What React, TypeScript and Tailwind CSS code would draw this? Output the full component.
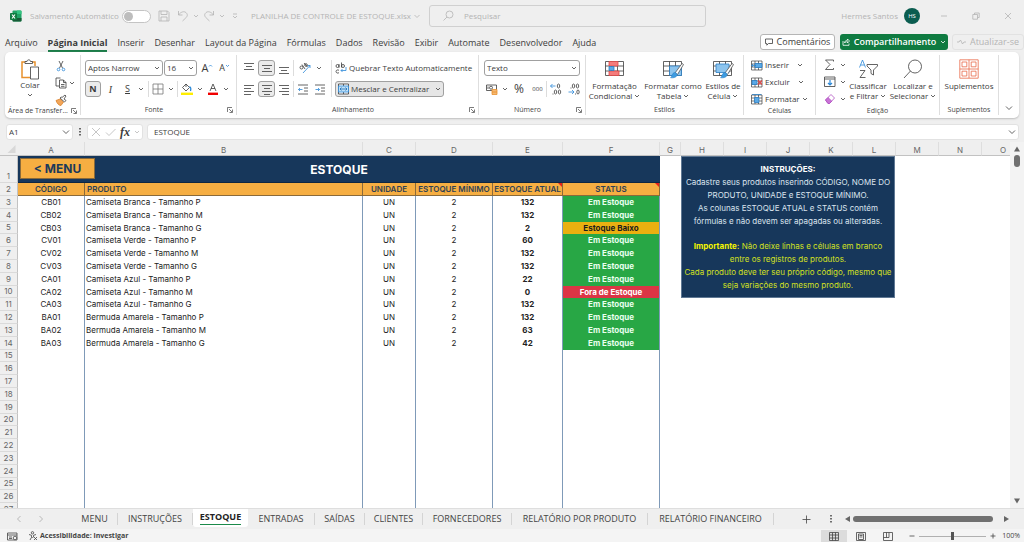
import React, { useState } from "react";
import clsx from "clsx";

const COLUMNS = [
  { letter: "A", width: "w-[67px]" },
  { letter: "B", width: "w-[278px]" },
  { letter: "C", width: "w-[53px]" },
  { letter: "D", width: "w-[77px]" },
  { letter: "E", width: "w-[70px]" },
  { letter: "F", width: "w-[97px]" },
  { letter: "G", width: "w-[21px]" },
  { letter: "H", width: "w-[43px]" },
  { letter: "I", width: "w-[43px]" },
  { letter: "J", width: "w-[43px]" },
  { letter: "K", width: "w-[43px]" },
  { letter: "L", width: "w-[43px]" },
  { letter: "M", width: "w-[43px]" },
  { letter: "N", width: "w-[43px]" },
  { letter: "O", width: "w-[43px]" },
];

const PRODUCTS = [
  { code: "CB01", name: "Camiseta Branca - Tamanho P", stock: 132 },
  { code: "CB02", name: "Camiseta Branca - Tamanho M", stock: 132 },
  { code: "CB03", name: "Camiseta Branca - Tamanho G", stock: 2 },
  { code: "CV01", name: "Camiseta Verde - Tamanho P", stock: 60 },
  { code: "CV02", name: "Camiseta Verde - Tamanho M", stock: 132 },
  { code: "CV03", name: "Camiseta Verde - Tamanho G", stock: 132 },
  { code: "CA01", name: "Camiseta Azul - Tamanho P", stock: 22 },
  { code: "CA02", name: "Camiseta Azul - Tamanho M", stock: 0 },
  { code: "CA03", name: "Camiseta Azul - Tamanho G", stock: 132 },
  { code: "BA01", name: "Bermuda Amarela - Tamanho P", stock: 132 },
  { code: "BA02", name: "Bermuda Amarela - Tamanho M", stock: 63 },
  { code: "BA03", name: "Bermuda Amarela - Tamanho G", stock: 42 },
];

const MIN_STOCK = 2;
const EMPTY_ROWS = Array.from({ length: 13 }, (_, i) => i + 15);

const MENU = [
  "Arquivo",
  "Página Inicial",
  "Inserir",
  "Desenhar",
  "Layout da Página",
  "Fórmulas",
  "Dados",
  "Revisão",
  "Exibir",
  "Automate",
  "Desenvolvedor",
  "Ajuda",
];

const SHEETS = [
  { name: "MENU", width: "w-[46px]" },
  { name: "INSTRUÇÕES", width: "w-[75px]" },
  { name: "ESTOQUE", width: "w-[55px]" },
  { name: "ENTRADAS", width: "w-[67px]" },
  { name: "SAÍDAS", width: "w-[50px]" },
  { name: "CLIENTES", width: "w-[58px]" },
  { name: "FORNECEDORES", width: "w-[89px]" },
  { name: "RELATÓRIO POR PRODUTO", width: "w-[136px]" },
  { name: "RELATÓRIO FINANCEIRO", width: "w-[126px]" },
];

type IconProps = { w?: number; h?: number; className?: string; children: React.ReactNode };

function Icon({ w = 12, h = 12, className, children }: IconProps) {
  return (
    <svg
      width={w}
      height={h}
      viewBox={`0 0 ${w} ${h}`}
      fill="none"
      stroke="currentColor"
      strokeWidth="0.8"
      className={clsx("shrink-0", className)}
      aria-hidden="true"
    >
      {children}
    </svg>
  );
}

function Chevron({ className }: { className?: string }) {
  return (
    <Icon w={6} h={6} className={className}>
      <path d="M1 2l2 2 2-2" />
    </Icon>
  );
}

function Divider() {
  return <span className="h-4 w-px shrink-0 bg-[#dcdcdc]" />;
}

type ToolProps = { label: string; className?: string; active?: boolean; children: React.ReactNode };

function Tool({ label, className = "w-[18px]", active, children }: ToolProps) {
  return (
    <button
      aria-label={label}
      className={clsx(
        "flex h-4 shrink-0 items-center justify-center",
        active && "rounded-[3px] border border-[#a0a0a0] bg-[#ebebeb]",
        className
      )}
    >
      {children}
    </button>
  );
}

type GroupProps = { label: string; className: string; launcher?: boolean; children: React.ReactNode };

function Group({ label, className, launcher, children }: GroupProps) {
  return (
    <section className={clsx("flex shrink-0 flex-col py-[3px]", className)}>
      <div className="flex h-full border-r border-[#dedede]">
        <div className="flex min-w-0 flex-1 flex-col">
          <div className="h-[51px] pt-[5px]">{children}</div>
          <div className="flex h-2.5 items-center text-[7px] leading-[10px] text-[#444]">
            <span className="flex-1 text-center whitespace-nowrap">{label}</span>
            {launcher && (
              <button aria-label={`Mais opções: ${label}`} className="mr-[3px]">
                <Icon w={6} h={6}>
                  <path d="M0.5 5V0.5H5M2 2l3 3M5.5 2.5v3h-3" strokeWidth="0.7" />
                </Icon>
              </button>
            )}
          </div>
        </div>
      </div>
    </section>
  );
}

function AlignIcon({ lines, top = 1, gap = 3 }: { lines: [number, number][]; top?: number; gap?: number }) {
  return (
    <Icon w={10} h={11}>
      {lines.map(([from, to], i) => (
        <path key={i} d={`M${from} ${top + i * gap + 0.5}H${to}`} />
      ))}
    </Icon>
  );
}

function GridPicture({ children }: { children?: React.ReactNode }) {
  return (
    <Icon w={22} h={19}>
      <path d="M1.500 1.500h18v14h-18zM7.500 1.500v14M13.500 1.500v14M1.500 6h18M1.500 11h18" />
      {children}
    </Icon>
  );
}

function BrushOverlay() {
  return (
    <>
      <path d="M20 3.500l1.500 1-6 10-2.500-1.500z" fill="#fff" stroke="#555" />
      <path d="M12.500 12.500c2 0 3 1.500 2.500 3-.8 2-3.500 2.600-6.500 2.300 1.500-.8 1.300-4.800 4-5.300z" fill="#3d9be0" stroke="#2b7fc4" strokeWidth="0.5" />
    </>
  );
}

type BigProps = { lines: string[]; chevron?: boolean; className: string; icon: React.ReactNode };

function BigButton({ lines, chevron = true, className, icon }: BigProps) {
  return (
    <button className={clsx("-mt-px flex shrink-0 flex-col items-center text-[8px] leading-[10px] whitespace-nowrap", className)}>
      <span className="mb-0.5 flex h-5 items-center">{icon}</span>
      {lines.map((line, i) => (
        <span key={line} className="flex items-center gap-0.5">
          {line}
          {chevron && i === lines.length - 1 && <Chevron />}
        </span>
      ))}
    </button>
  );
}

function TitleBar() {
  return (
    <header className="flex h-8 shrink-0 items-center text-[8px] text-[#b4b4b4]">
      <div className="flex w-[429px] shrink-0 items-center whitespace-nowrap">
        <svg width="12" height="12" viewBox="0 0 12 12" className="ml-2.5" aria-hidden="true">
          <rect x="2.500" y="0.500" width="9" height="11" rx="1" fill="#21a366" />
          <path d="M7 .5h3.500a1 1 0 011 1V4H7z" fill="#33c481" />
          <path d="M2.500 8h9v2.500a1 1 0 01-1 1h-7a1 1 0 01-1-1z" fill="#185c37" />
          <rect x="0" y="3" width="7" height="7" rx="0.800" fill="#107c41" />
          <path d="M2 4.500l3 4M5 4.500l-3 4" stroke="#fff" strokeWidth="1.100" />
        </svg>
        <label htmlFor="autosave" className="ml-2 w-[92px]">
          Salvamento Automático
        </label>
        <input
          id="autosave"
          type="checkbox"
          role="switch"
          className="h-[13px] w-[29px] shrink-0 appearance-none rounded-full border border-[#c4c4c4] bg-white before:m-px before:block before:size-[9px] before:rounded-full before:bg-[#bdbdbd]"
        />
        <Tool label="Salvar" className="ml-[7px] w-3">
          <Icon>
            <path d="M1 1h8.500L11 2.500V11H1zM3 1v3.500h6V1M3 11V7h6v4" />
          </Icon>
        </Tool>
        <Tool label="Desfazer" className="ml-[7px] w-[22px] gap-1">
          <Icon>
            <path d="M1.500 1v4h4M1.500 5C3.500 2 7 .8 9 2.600c2.200 2 1.300 4-.5 5.600L5.500 11" />
          </Icon>
          <Chevron />
        </Tool>
        <Tool label="Refazer" className="ml-1 w-[22px] gap-1">
          <Icon>
            <path d="M10.500 1v4h-4M10.500 5C8.500 2 5 .8 3 2.600c-2.200 2-1.300 4 .5 5.600L6.500 11" />
          </Icon>
          <Chevron />
        </Tool>
        <Tool label="Personalizar" className="ml-1.5 w-2">
          <Icon w={6} h={6}>
            <path d="M1 1h4M1 3l2 2 2-2" />
          </Icon>
        </Tool>
        <button className="ml-3 flex items-center gap-0.5">
          PLANILHA DE CONTROLE DE ESTOQUE.xlsx
          <Icon w={8} h={8}>
            <path d="M1.500 3L4 5.500 6.500 3" />
          </Icon>
        </button>
      </div>
      <div className="flex h-[22px] w-[277px] items-center gap-2.5 rounded-[3px] border border-[#d0d0d0] pl-3">
        <Icon w={12} h={12}>
          <circle cx="7.500" cy="4.500" r="3.500" />
          <path d="M5 7L1.500 10.500" />
        </Icon>
        <input aria-label="Pesquisar" placeholder="Pesquisar" className="min-w-0 flex-1 bg-transparent outline-none placeholder:text-[#b4b4b4]" />
      </div>
      <div className="ml-auto flex items-center pr-0">
        <span>Hermes Santos</span>
        <span className="mr-2 ml-1.5 flex size-4 items-center justify-center rounded-full bg-[#0b5d50] text-[6px] text-white">HS</span>
        <button aria-label="Minimizar" className="flex w-8 justify-center">
          <Icon w={8} h={8}>
            <path d="M1 4h6" />
          </Icon>
        </button>
        <button aria-label="Restaurar" className="flex w-8 justify-center">
          <Icon w={8} h={8}>
            <path d="M.8 2.500h4.700v4.700H.8zM2.500 2.500V1h4.700v4.500H5.500" />
          </Icon>
        </button>
        <button aria-label="Fechar" className="flex w-8 justify-center">
          <Icon w={8} h={8}>
            <path d="M1 1l6 6M7 1L1 7" />
          </Icon>
        </button>
      </div>
    </header>
  );
}

function MenuBar() {
  return (
    <nav className="flex h-5 shrink-0 items-center pl-[5px] text-[9px] whitespace-nowrap text-[#3c3c3c]">
      <div className="flex flex-1 gap-2.5 pt-1">
        {MENU.map((item) => (
          <button
            key={item}
            className={clsx("border-b-2 leading-[14px]", item === "Página Inicial" ? "border-[#1b7c48] font-bold" : "border-transparent")}
          >
            {item}
          </button>
        ))}
      </div>
      <button className="flex h-4 w-[75px] items-center justify-center gap-1 rounded-[3px] border border-[#b5b5b5] bg-white">
        <Icon w={8} h={8}>
          <path d="M.5 1h7v4.500H3.500L1.800 7.200V5.500H.5z" />
        </Icon>
        Comentários
      </button>
      <button className="ml-[5px] flex h-4 w-[108px] items-center justify-center gap-1 rounded-[3px] bg-[#0f7b41] font-semibold text-white">
        <Icon w={8} h={8}>
          <path d="M1 3v4.300h6V5.500M2.500 5C2.700 3 4 2.300 5.500 2.300V1l2 2-2 2V3.700C4.200 3.700 3.200 4 2.500 5z" />
        </Icon>
        Compartilhamento
        <Chevron />
      </button>
      <button className="ml-1 flex h-4 w-[72px] items-center justify-center gap-1 rounded-[3px] border border-[#e2e2e2] text-[#b4b4b4]">
        <Icon w={9} h={8}>
          <path d="M0 4h2l1.500-2 2 4L7 4h2" />
        </Icon>
        Atualizar-se
      </button>
    </nav>
  );
}

function ClipboardGroup() {
  return (
    <Group label="Área de Transfer..." className="w-[76px]" launcher>
      <div className="flex">
        <button className="-mt-px flex w-[50px] flex-col items-center text-[8px] leading-[10px]">
          <Icon w={20} h={21}>
            <path d="M6 3H2v15.500h8" stroke="#e8912d" strokeWidth="1.500" />
            <path d="M11 3h4v4" stroke="#e8912d" strokeWidth="1.500" />
            <path d="M5 4.500V2.500h2C7 .3 10.500.3 10.500 2.500h2v2z" fill="#fff" />
            <path d="M10.500 8h8v12h-8z" fill="#fff" />
          </Icon>
          Colar
          <Chevron className="mt-0.5" />
        </button>
        <div className="-mt-0.5 flex flex-col gap-px">
          <Tool label="Recortar" className="w-3">
            <Icon>
              <path d="M4 1l3.500 7M8 1L4.500 8" />
              <circle cx="3.500" cy="9.500" r="1.300" stroke="#2b88d8" />
              <circle cx="8.500" cy="9.500" r="1.300" stroke="#2b88d8" />
            </Icon>
          </Tool>
          <Tool label="Copiar" className="w-5 gap-0.5">
            <Icon>
              <path d="M4 9H1V1h4.500M4.500 3h4L11 5.500V11H4.500zM8.500 3v2.500H11M6 7.500h3.500M6 9.300h3.500" />
            </Icon>
            <Chevron />
          </Tool>
          <Tool label="Pincel de Formatação" className="w-3">
            <Icon>
              <path d="M1 6.500l4-1.500 3.500 3L6 11.500C4 11.500 2 9.500 1 6.500z" fill="#f2a65a" stroke="#d9822b" />
              <path d="M5 4l4.500 4L11 6.500 9 5l2-3-1-1-3 2.500L6.200 3z" fill="#fff" />
            </Icon>
          </Tool>
        </div>
      </div>
    </Group>
  );
}

function FontGroup() {
  return (
    <Group label="Fonte" className="w-[156px]" launcher>
      <div className="flex items-center pl-1">
        <div className="flex h-4 w-[78px] items-center rounded-[3px] border border-[#a0a0a0] px-0.5">
          <select aria-label="Fonte" className="min-w-0 flex-1 appearance-none text-[8px] leading-3 outline-none">
            <option>Aptos Narrow</option>
          </select>
          <Chevron />
        </div>
        <div className="ml-px flex h-4 w-[33px] items-center rounded-[3px] border border-[#a0a0a0] px-0.5">
          <select aria-label="Tamanho da Fonte" className="min-w-0 flex-1 appearance-none text-[8px] leading-3 outline-none">
            <option>16</option>
          </select>
          <Chevron />
        </div>
        <Tool label="Aumentar Fonte" className="ml-0.5 w-[17px] text-[11px]">
          A
          <Icon w={5} h={8}>
            <path d="M1 2.500L2.500 1 4 2.500" stroke="#2b88d8" />
          </Icon>
        </Tool>
        <Tool label="Diminuir Fonte" className="w-[17px] text-[9px]">
          A
          <Icon w={5} h={8}>
            <path d="M1 1L2.500 2.500 4 1" stroke="#2b88d8" />
          </Icon>
        </Tool>
      </div>
      <div className="mt-[5px] flex items-center pl-1">
        <Tool label="Negrito" active className="w-4 text-[9px] font-bold">
          N
        </Tool>
        <Tool label="Itálico" className="ml-px w-[17px] font-['Liberation_Serif',serif] text-[10px] italic">
          I
        </Tool>
        <Tool label="Sublinhado" className="w-[17px] text-[9px] underline">
          S
        </Tool>
        <Chevron className="mr-1 ml-0.5" />
        <Divider />
        <Tool label="Bordas" className="ml-[3px] w-[22px] gap-1">
          <Icon>
            <path d="M1 1h10v10H1zM6 1v10M1 6h10" stroke="#777" />
          </Icon>
          <Chevron />
        </Tool>
        <span className="ml-[3px]" />
        <Divider />
        <Tool label="Cor de Preenchimento" className="ml-[3px] w-[22px] gap-1">
          <Icon>
            <path d="M5 1L8.500 4.500 5 8 1.500 4.500zM5 1v3" />
            <path d="M8.500 3.500c1.500 1 1.500 3 1 4.500" stroke="#2b88d8" strokeWidth="1.200" />
            <path d="M0 10.800h12" stroke="#ffee00" strokeWidth="2.400" />
          </Icon>
          <Chevron />
        </Tool>
        <Tool label="Cor da Fonte" className="ml-1 w-[22px] gap-1">
          <Icon>
            <path d="M3 8l3-7 3 7M4 5.500h4" />
            <path d="M1 10.800h10" stroke="#f00000" strokeWidth="2.400" />
          </Icon>
          <Chevron />
        </Tool>
      </div>
    </Group>
  );
}

function AlignGroup() {
  return (
    <Group label="Alinhamento" className="w-[242px]" launcher>
      <div className="flex">
        <div className="w-[94px] shrink-0 pl-[3px]">
          <div className="flex items-center">
            <Tool label="Alinhar em Cima">
              <AlignIcon lines={[[0, 10], [2, 8], [0, 10]]} top={0} />
            </Tool>
            <Tool label="Alinhar no Meio" active className="w-[17px]">
              <AlignIcon lines={[[0, 10], [2, 8], [0, 10]]} top={2} />
            </Tool>
            <Tool label="Alinhar Embaixo">
              <AlignIcon lines={[[0, 10], [2, 8], [0, 10]]} top={4} />
            </Tool>
            <Divider />
            <Tool label="Orientação" className="ml-1 w-6 gap-1">
              <Icon w={13}>
                <path d="M4 11L11 3.500M8.500 3.500H11V6" stroke="#2b88d8" />
                <circle cx="2.500" cy="5.500" r="1.500" />
                <path d="M3 2.500l3 4.500M5 1l3.500 4" />
                <circle cx="7" cy="3" r="1.300" />
              </Icon>
              <Chevron />
            </Tool>
          </div>
          <div className="mt-[5px] flex items-center">
            <Tool label="Alinhar à Esquerda">
              <AlignIcon lines={[[0, 10], [0, 7], [0, 10], [0, 7]]} />
            </Tool>
            <Tool label="Centralizar" active className="w-[17px]">
              <AlignIcon lines={[[0, 10], [2, 8], [0, 10], [2, 8]]} />
            </Tool>
            <Tool label="Alinhar à Direita">
              <AlignIcon lines={[[0, 10], [3, 10], [0, 10], [3, 10]]} />
            </Tool>
            <Divider />
            <Tool label="Diminuir Recuo" className="w-[17px]">
              <Icon w={10} h={11}>
                <path d="M0 1h10M6 4h4M6 7h4M0 10h10" />
                <path d="M4.500 5.500H.5M2 4L.5 5.500 2 7" stroke="#2b88d8" />
              </Icon>
            </Tool>
            <Tool label="Aumentar Recuo" className="w-[17px]">
              <Icon w={10} h={11}>
                <path d="M0 1h10M6 4h4M6 7h4M0 10h10" />
                <path d="M.5 5.500h4M3 4l1.500 1.500L3 7" stroke="#2b88d8" />
              </Icon>
            </Tool>
          </div>
        </div>
        <div className="flex flex-col items-start gap-[5px] border-l border-[#dedede] pl-[3px] text-[8px] whitespace-nowrap">
          <button className="flex h-4 items-center gap-0.5">
            <Icon w={12}>
              <circle cx="2.500" cy="4" r="1.500" />
              <path d="M4 2v3.700M6.500 .5v5" />
              <circle cx="8" cy="4" r="1.500" />
              <path d="M4 8.300c-1.500-1-3 0-3 1.200s1.500 2.200 3 1.200" />
              <path d="M11 5v3.500H6M7.500 7L6 8.500 7.500 10" stroke="#2b88d8" />
            </Icon>
            Quebrar Texto Automaticamente
          </button>
          <button className="flex h-4 items-center gap-0.5 rounded-[3px] border border-[#a0a0a0] bg-[#e6e6e6] px-0.5">
            <Icon w={11}>
              <path d="M.5 1h10v10H.5zM5.500 1v2M5.500 9v2" fill="#fff" />
              <path d="M.5 3h10v6H.5z" fill="#bfe0f7" stroke="#2b88d8" />
              <path d="M2 6h7M3.500 4.500L2 6l1.500 1.500M7.500 4.500L9 6 7.500 7.500" stroke="#1f6fb5" />
            </Icon>
            Mesclar e Centralizar
            <Chevron className="ml-1" />
          </button>
        </div>
      </div>
    </Group>
  );
}

function NumberGroup() {
  return (
    <Group label="Número" className="w-[107px]" launcher>
      <div className="px-[5px]">
        <div className="flex h-4 items-center rounded-[3px] border border-[#a0a0a0] px-0.5">
          <select aria-label="Formato de Número" className="min-w-0 flex-1 appearance-none text-[8px] leading-3 outline-none">
            <option>Texto</option>
          </select>
          <Chevron />
        </div>
        <div className="mt-[5px] flex items-center">
          <Tool label="Formato de Contabilização" className="ml-0.5 w-[22px] gap-1">
            <Icon>
              <path d="M.5 2h10v5.500H.5zM2 3.500v2.500" />
              <circle cx="5" cy="4.700" r="1.500" />
              <path d="M6 6.500h5v5H6zM6 8.200h5M6 9.800h5" stroke="#e8912d" fill="#f9c68a" />
            </Icon>
            <Chevron />
          </Tool>
          <Tool label="Porcentagem" className="ml-0.5 w-[18px] text-[12px]">
            %
          </Tool>
          <Tool label="Separador de Milhares" className="ml-px w-[17px] text-[6px]">
            000
          </Tool>
          <Divider />
          <Tool label="Aumentar Casas Decimais">
            <Icon>
              <path d="M5.500 3H.5M2.500 1L.5 3l2 2" stroke="#2b88d8" />
              <ellipse cx="8.500" cy="3" rx="1.200" ry="2" />
              <ellipse cx="5.500" cy="9" rx="1.200" ry="2" />
              <ellipse cx="9.500" cy="9" rx="1.200" ry="2" />
              <path d="M2.500 11h1" />
            </Icon>
          </Tool>
          <Tool label="Diminuir Casas Decimais">
            <Icon>
              <ellipse cx="5.500" cy="3" rx="1.200" ry="2" />
              <ellipse cx="9.500" cy="3" rx="1.200" ry="2" />
              <path d="M2.500 5h1M7 11h1" />
              <path d="M.5 9h5.500M4 7l2 2-2 2" stroke="#2b88d8" />
              <ellipse cx="10" cy="9" rx="1.200" ry="2" />
            </Icon>
          </Tool>
        </div>
      </div>
    </Group>
  );
}

function StylesGroup() {
  return (
    <Group label="Estilos" className="w-[158px]">
      <div className="flex">
        <BigButton
          lines={["Formatação", "Condicional"]}
          className="w-[57px]"
          icon={
            <GridPicture>
              <path d="M5 1.500h9V6H5zM5 11h10v4.500H5z" fill="#f47c7c" stroke="#e04848" />
              <path d="M5 6.500h5v4H5z" fill="#5aa9e6" stroke="#2b7fc4" />
            </GridPicture>
          }
        />
        <BigButton
          lines={["Formatar como", "Tabela"]}
          className="w-[60px]"
          icon={
            <GridPicture>
              <path d="M7.500 6h12v9.500h-12z" fill="#8cc4ee" stroke="#2b7fc4" />
              <BrushOverlay />
            </GridPicture>
          }
        />
        <BigButton
          lines={["Estilos de", "Célula"]}
          className="w-10"
          icon={
            <GridPicture>
              <path d="M4 4h13v8.500H4z" fill="#8cc4ee" stroke="#2b7fc4" />
              <BrushOverlay />
            </GridPicture>
          }
        />
      </div>
    </Group>
  );
}

function CellIcon({ children }: { children: React.ReactNode }) {
  return (
    <Icon w={12} h={11}>
      <path d="M.5 1h10.500v9H.5zM4 1v9M7.500 1v9M.5 4h10.500M.5 7h10.500" strokeWidth="0.700" />
      {children}
    </Icon>
  );
}

function CellsGroup() {
  return (
    <Group label="Células" className="w-[72px]">
      <div className="-mt-[3px] flex flex-col items-start gap-px pl-[7px] text-[8px]">
        <button className="flex h-4 items-center gap-0.5">
          <CellIcon>
            <path d="M4 3.500h7v4H4z" fill="#5aa9e6" stroke="#2b7fc4" />
            <path d="M5 5.500H.5M2 4L.5 5.500 2 7" stroke="#2b7fc4" />
          </CellIcon>
          Inserir
          <Chevron className="ml-1.5" />
        </button>
        <button className="flex h-4 items-center gap-0.5">
          <CellIcon>
            <path d="M1 3.500h5v4H1z" fill="#5aa9e6" stroke="#2b7fc4" />
            <path d="M7 3.500l4 4M11 3.500l-4 4" stroke="#e04848" strokeWidth="1.200" />
          </CellIcon>
          Excluir
          <Chevron className="ml-1.5" />
        </button>
        <button className="flex h-4 items-center gap-0.5">
          <CellIcon>
            <path d="M3.500 3.500h4.500v5H3.500z" fill="#5aa9e6" stroke="#2b7fc4" />
            <path d="M1 .5h9.500" stroke="#2b7fc4" />
          </CellIcon>
          Formatar
          <Chevron />
        </button>
      </div>
    </Group>
  );
}

function EditGroup() {
  return (
    <Group label="Edição" className="w-[124px]">
      <div className="flex">
        <div className="-mt-[3px] flex w-[30px] shrink-0 flex-col gap-px pl-2">
          <Tool label="AutoSoma" className="w-[22px] gap-1">
            <Icon>
              <path d="M9.500 2.500V1H1.500L6 5.500 1.500 10.500h8V9" />
            </Icon>
            <Chevron />
          </Tool>
          <Tool label="Preencher" className="w-[22px] gap-1">
            <Icon>
              <path d="M.5 1h10.500v9.500H.5zM.5 3H11" />
              <path d="M6 4v5M4 7l2 2 2-2" stroke="#2b88d8" strokeWidth="1.200" />
            </Icon>
            <Chevron />
          </Tool>
          <Tool label="Limpar" className="w-[22px] gap-1">
            <Icon>
              <path d="M1.500 7L7 1.500l3.500 3.500L5.500 10.500H4z" stroke="#b04fc0" fill="#fff" />
              <path d="M1.500 7L4 4.500 7.800 8.200 5.500 10.500H4z" fill="#c973d6" stroke="#b04fc0" />
            </Icon>
            <Chevron />
          </Tool>
        </div>
        <BigButton
          lines={["Classificar", "e Filtrar"]}
          className="w-[44px]"
          icon={
            <Icon w={20} h={20}>
              <path d="M1.500 8.500L4.500 1l3 7.500M2.500 6h4" stroke="#2b88d8" />
              <path d="M2 11.500h5L2 18.500h5.500" />
              <path d="M9 5.500h10.500v1.500L15.500 11v5l-2.500-1.500V11L9 7z" />
            </Icon>
          }
        />
        <BigButton
          lines={["Localizar e", "Selecionar"]}
          className="w-[46px]"
          icon={
            <Icon w={20} h={20}>
              <circle cx="12" cy="7.500" r="6.500" />
              <path d="M7.500 12L1 19" />
            </Icon>
          }
        />
      </div>
    </Group>
  );
}

function Ribbon() {
  return (
    <div className="mx-[5px] flex h-[66px] shrink-0 rounded-[5px] bg-white text-[#3c3c3c] shadow-[0_1px_2px_#bdbdbd]">
      <ClipboardGroup />
      <FontGroup />
      <AlignGroup />
      <NumberGroup />
      <StylesGroup />
      <CellsGroup />
      <EditGroup />
      <Group label="Suplementos" className="w-[59px]">
        <BigButton
          lines={["Suplementos"]}
          chevron={false}
          className="w-full"
          icon={
            <Icon w={20} h={20} className="text-[#e8694a]">
              <path d="M.8 .8h18.400v18.400H.8zM10 .8v18.400M.8 10h18.400" />
              <path d="M3 3h4.800v4.800H3zM12.200 3H17v4.800h-4.800zM3 12.200h4.800V17H3zM12.200 12.200H17V17h-4.800z" />
            </Icon>
          }
        />
      </Group>
      <button aria-label="Recolher faixa" className="flex flex-1 items-end justify-center pb-1.5">
        <Icon w={8} h={8}>
          <path d="M1 2.500l3 3 3-3" />
        </Icon>
      </button>
    </div>
  );
}

function FormulaBar() {
  return (
    <div className="flex h-6 shrink-0 items-center pt-[3px] pr-[5px] pl-1.5 text-[8px] text-[#3c3c3c]">
      <div className="flex h-4 w-[67px] items-center rounded-[3px] border border-[#e2e2e2] bg-white px-0.5">
        <input aria-label="Caixa de Nome" defaultValue="A1" className="min-w-0 flex-1 outline-none" />
        <Icon w={8} h={8}>
          <path d="M1 2.500l3 3 3-3" />
        </Icon>
      </div>
      <Icon w={14} h={8}>
        <path d="M7 0v8" strokeWidth="1.500" strokeDasharray="1.5 1.5" />
      </Icon>
      <div className="flex h-4 w-14 items-center justify-between rounded-[3px] border border-[#e2e2e2] bg-white px-0.5 text-[#b8b8b8]">
        <button aria-label="Cancelar">
          <Icon w={11} h={10}>
            <path d="M2 1l8 8M10 1L2 9" />
          </Icon>
        </button>
        <button aria-label="Inserir">
          <Icon w={11} h={10}>
            <path d="M1 5.500L4 8.500 10.500 2" />
          </Icon>
        </button>
        <button className="font-['Liberation_Serif',serif] text-[12px] leading-3 font-bold text-[#3c3c3c] italic">fx</button>
        <Chevron />
      </div>
      <div className="ml-1 flex h-4 flex-1 items-center rounded-[3px] border border-[#e2e2e2] bg-white pr-0.5 pl-1.5">
        <input aria-label="Barra de fórmulas" defaultValue="ESTOQUE" className="min-w-0 flex-1 outline-none" />
        <Icon w={8} h={8}>
          <path d="M1 2.500l3 3 3-3" />
        </Icon>
      </div>
    </div>
  );
}

const rowHead = "border-r border-b border-[#dadada] border-r-[#c2c2c2] bg-[#efefef] text-center text-[8px] font-normal text-[#666]";
const headCell = "border-r border-b border-[#8a6a3a] bg-[#f6ae42] font-semibold text-[#2f4154]";
const line = "border-r border-[#7f9ab8]";

function StatusCell({ stock }: { stock: number }) {
  if (stock === 0) return <td className="border-r border-[#7f9ab8] bg-[#dc3545] text-center font-bold text-white">Fora de Estoque</td>;
  if (stock <= MIN_STOCK) return <td className="border-r border-[#7f9ab8] bg-[#eab010] text-center font-bold text-[#1d1d1d]">Estoque Baixo</td>;
  return <td className="border-r border-[#7f9ab8] bg-[#28a745] text-center font-bold text-[#e9ffee]">Em Estoque</td>;
}

function CommentMark() {
  return <span className="absolute top-0 right-0 border-t-4 border-l-4 border-t-[#e8201a] border-l-transparent" />;
}

function Sheet() {
  return (
    <div className="flex min-h-0 flex-1">
      <div className="relative min-w-0 flex-1 overflow-hidden bg-white font-['Inter',sans-serif] text-[8px] leading-[11px] whitespace-nowrap text-[#222]">
        <table className="w-full table-fixed border-separate border-spacing-0">
          <colgroup>
            <col className="w-[18px]" />
            {COLUMNS.map((c) => (
              <col key={c.letter} className={c.width} />
            ))}
          </colgroup>
          <thead>
            <tr className="h-[14px] bg-[#efefef] leading-[10px] text-[#666]">
              <th className="border-b border-[#c2c2c2] p-0">
                <Icon w={16} h={8}>
                  <path d="M15.500 0v8h-8z" fill="#d8d8d8" stroke="none" />
                </Icon>
              </th>
              {COLUMNS.map((c) => (
                <th key={c.letter} className="border-r border-b border-[#c2c2c2] border-r-[#dedede] p-0 pt-[3px] font-normal">
                  {c.letter}
                </th>
              ))}
            </tr>
          </thead>
          <tbody className="[&_td]:py-0 [&_th]:p-0">
            <tr className="h-[27px]">
              <th className={clsx(rowHead, "align-bottom")}>1</th>
              <td colSpan={6} className="border-b border-[#0f2742] bg-[#17375b] text-center text-[12px] font-bold text-white">
                ESTOQUE
              </td>
              <td colSpan={9} />
            </tr>
            <tr className="h-[13px]">
              <th className={rowHead}>2</th>
              <th className={headCell}>CÓDIGO</th>
              <th className={clsx(headCell, "text-left")}>
                <span className="pl-0.5">PRODUTO</span>
              </th>
              <th className={headCell}>UNIDADE</th>
              <th className={headCell}>ESTOQUE MÍNIMO</th>
              <th className={clsx(headCell, "relative")}>
                ESTOQUE ATUAL
                <CommentMark />
              </th>
              <th className={clsx(headCell, "relative")}>
                STATUS
                <CommentMark />
              </th>
              <td colSpan={9} />
            </tr>
            {PRODUCTS.map((p, i) => (
              <tr key={p.code} className="h-[13px] nth-[5n]:h-3">
                <th className={rowHead}>{i + 3}</th>
                <td className={clsx(line, "text-center")}>{p.code}</td>
                <td className={clsx(line, "pl-px")}>{p.name}</td>
                <td className={clsx(line, "text-center")}>UN</td>
                <td className={clsx(line, "text-center")}>{MIN_STOCK}</td>
                <td className={clsx(line, "text-center font-bold")}>{p.stock}</td>
                <StatusCell stock={p.stock} />
                <td colSpan={9} />
              </tr>
            ))}
            {EMPTY_ROWS.map((n) => (
              <tr key={n} className="h-[13px] nth-[5n]:h-3">
                <th className={rowHead}>{n}</th>
                <td className={line} />
                <td className={line} />
                <td className={line} />
                <td className={line} />
                <td className={line} />
                <td className={line} />
                <td colSpan={9} />
              </tr>
            ))}
          </tbody>
        </table>

        {/* shapes floating over the cells */}
        <a
          href="#menu"
          className="absolute top-4 left-5 flex h-[21px] w-[75px] items-center justify-center border border-[#8a6a3a] bg-[#f6ae42] text-[12px] font-bold text-[#1d3a5a]"
        >
          &lt; MENU
        </a>
        <aside className="absolute top-3.5 left-[681px] h-[142px] w-[214px] border border-[#5f7894] bg-[#17375b] pt-1.5 text-center text-[8px] leading-[13px] text-[#dbe4ee]">
          <p className="font-bold text-white">INSTRUÇÕES:</p>
          <p>
            Cadastre seus produtos inserindo CÓDIGO, NOME DO
            <br />
            PRODUTO, UNIDADE e ESTOQUE MÍNIMO.
          </p>
          <p>
            As colunas ESTOQUE ATUAL e STATUS contém
            <br />
            fórmulas e não devem ser apagadas ou alteradas.
          </p>
          <p className="mt-3 text-[#d3e021]">
            <b className="text-[#f4f400]">Importante:</b> Não deixe linhas e células em branco
            <br />
            entre os registros de produtos.
          </p>
          <p className="text-[#d3e021]">
            Cada produto deve ter seu próprio código, mesmo que
            <br />
            seja variações do mesmo produto.
          </p>
        </aside>
      </div>
      <div className="flex w-3.5 shrink-0 flex-col items-center bg-[#f3f3f3] py-1 text-[#666]">
        <Icon w={6} h={6}>
          <path d="M3 .5l3 5H0z" fill="currentColor" stroke="none" />
        </Icon>
        <span className="mt-[3px] h-3 w-1.5 rounded-full bg-[#707070]" />
        <Icon w={6} h={6} className="mt-auto">
          <path d="M0 .5h6l-3 5z" fill="currentColor" stroke="none" />
        </Icon>
      </div>
    </div>
  );
}

function SheetTabs() {
  const [active, setActive] = useState("ESTOQUE");

  return (
    <div className="flex h-[21px] shrink-0 items-center border-t border-[#dedede] text-[9px] text-[#444]">
      <div className="flex w-[72px] shrink-0 gap-3.5 pl-[15px] text-[#aaa]">
        <button aria-label="Anterior">
          <Icon w={8} h={8}>
            <path d="M5.500 1l-3 3 3 3" />
          </Icon>
        </button>
        <button aria-label="Próxima">
          <Icon w={8} h={8}>
            <path d="M2.500 1l3 3-3 3" />
          </Icon>
        </button>
      </div>
      <div className="flex h-full items-center whitespace-nowrap">
        {SHEETS.map((s) => (
          <button
            key={s.name}
            onClick={() => setActive(s.name)}
            className={clsx(
              "flex shrink-0 justify-center",
              s.width,
              s.name === active ? "h-[18px] self-start rounded-b-[3px] bg-white font-bold text-[#222]" : "h-3 items-center border-r border-[#d4d4d4]"
            )}
          >
            {s.name === active ? <span className="h-4 border-b border-[#1b8a4a] leading-[15px]">{s.name}</span> : s.name}
          </button>
        ))}
      </div>
      <button aria-label="Nova planilha" className="ml-7">
        <Icon w={9} h={9}>
          <path d="M4.500 .5v8M.5 4.500h8" />
        </Icon>
      </button>
      <Icon w={4} h={8} className="ml-[18px]">
        <path d="M2 0v8" strokeWidth="1.500" strokeDasharray="1.500 1.500" />
      </Icon>
      <div className="ml-3 flex flex-1 items-center gap-[3px] pr-[15px] text-[#666]">
        <Icon w={5} h={6}>
          <path d="M5 0v6L0 3z" fill="currentColor" stroke="none" />
        </Icon>
        <span className="mr-2 h-1.5 flex-1 rounded-full bg-[#707070]" />
        <Icon w={5} h={6}>
          <path d="M0 0v6l5-3z" fill="currentColor" stroke="none" />
        </Icon>
      </div>
    </div>
  );
}

function StatusBar() {
  return (
    <footer className="flex h-[13px] shrink-0 items-center bg-[#f4f4f4] pt-px text-[7px] text-[#444]">
      <Icon w={11} h={9} className="ml-[7px]">
        <path d="M.5 1h9.500v7H.5zM.5 3h9.500M2 5h3M2 6.500h3" />
        <circle cx="8" cy="6" r="1.800" fill="#f4f4f4" />
      </Icon>
      <button className="ml-2.5 flex items-center gap-0.5 font-bold">
        <Icon w={10} h={10}>
          <circle cx="4.500" cy="1.800" r="1.200" />
          <path d="M1 3.500l2.500.8v2L2 9M8 3.500l-2.500.8v2M4 7l.5-1M6 6l3 3M9 6L6 9" />
        </Icon>
        Acessibilidade: investigar
      </button>
      <div className="ml-auto flex h-full items-center">
        <button aria-label="Normal" className="flex h-full w-[26px] items-center justify-center bg-[#dcdcdc]">
          <Icon w={10} h={9}>
            <path d="M.5 .5h9v8h-9zM3.500 .5v8M6.500 .5v8M.5 3h9M.5 6h9" />
          </Icon>
        </button>
        <button aria-label="Layout da Página" className="flex w-[27px] justify-center">
          <Icon w={10} h={9}>
            <path d="M.5 .5h9v8h-9zM2.500 2h5v5.500h-5zM3.500 3.500h3M3.500 5h3" />
          </Icon>
        </button>
        <button aria-label="Quebra de Página" className="flex w-[27px] justify-center">
          <Icon w={10} h={9}>
            <path d="M.5 .5h9v8h-9zM.5 5.500h5.500V.5M3.500 .5v5" />
          </Icon>
        </button>
        <button aria-label="Reduzir" className="ml-2">
          <Icon w={6} h={6}>
            <path d="M.5 3h5" />
          </Icon>
        </button>
        <input
          type="range"
          aria-label="Zoom"
          className="mx-1 h-2 w-[67px] appearance-none bg-[linear-gradient(#b0b0b0,#b0b0b0)] bg-[length:100%_1px] bg-center bg-no-repeat [&::-webkit-slider-thumb]:h-2 [&::-webkit-slider-thumb]:w-[3px] [&::-webkit-slider-thumb]:appearance-none [&::-webkit-slider-thumb]:bg-[#555]"
        />
        <button aria-label="Ampliar">
          <Icon w={6} h={6}>
            <path d="M.5 3h5M3 .5v5" />
          </Icon>
        </button>
        <span className="w-7 pr-1 text-right">100%</span>
      </div>
    </footer>
  );
}

export default function App() {
  return (
    <div className="flex h-screen flex-col overflow-hidden bg-[#efefef] font-['Open_Sans','Noto_Sans',sans-serif]">
      <TitleBar />
      <MenuBar />
      <Ribbon />
      <FormulaBar />
      <Sheet />
      <SheetTabs />
      <StatusBar />
    </div>
  );
}
